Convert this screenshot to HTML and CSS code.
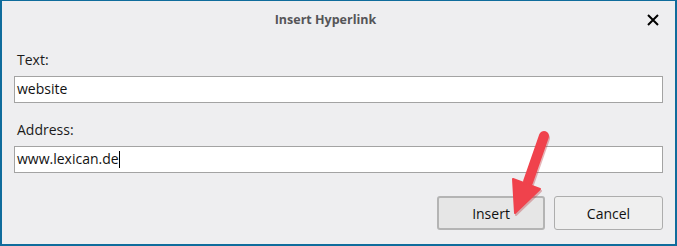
FILE: index.html
```html
<!DOCTYPE html>
<html lang="en">
<head>
    <meta charset="UTF-8">
    <title>Insert Hyperlink</title>
    <link rel="stylesheet" href="styles.css">
</head>
<body>
    <div class="dialog">
        <div class="title-bar">
            <span class="title">Insert Hyperlink</span>
            <span class="close-button">
                <svg width="12" height="12" viewBox="0 0 12 12"><path d="M1 1 L11 11 M11 1 L1 11" stroke="#000" stroke-width="2" fill="none"/></svg>
            </span>
        </div>
        <div class="form">
            <label class="field-label first">Text:</label>
            <div class="text-field">website</div>
            <label class="field-label">Address:</label>
            <div class="text-field">www.lexican.de<span class="caret"></span></div>
            <div class="button-row">
                <button class="dialog-button default">Insert</button>
                <button class="dialog-button">Cancel</button>
            </div>
        </div>
        <!-- callout arrow pointing at the Insert button -->
        <svg class="callout-arrow" width="60" height="100" viewBox="0 0 60 100">
            <g transform="translate(1 2)" fill="#b8323a" stroke="#b8323a" opacity="0.35">
                <path d="M42 14 L26 60" stroke-width="10" stroke-linecap="round"/>
                <path d="M11 57 L38 67 L13 91 Z" stroke-width="2" stroke-linejoin="round"/>
            </g>
            <g fill="#f0424c" stroke="#f0424c">
                <path d="M42 14 L26 60" stroke-width="10" stroke-linecap="round"/>
                <path d="M11 57 L38 67 L13 91 Z" stroke-width="2" stroke-linejoin="round"/>
            </g>
        </svg>
    </div>
</body>
</html>
```

FILE: styles.css
```css
body {
    margin: 0;
    font-family: 'Open Sans', 'Noto Sans', sans-serif;
}
.dialog {
    position: relative;
    box-sizing: border-box;
    width: 677px;
    height: 246px;
    background: #eeeef0;
    border: 2px solid #0f6c9c;
    border-top-width: 1px;
    overflow: hidden;
}
.title-bar {
    height: 36px;
    display: flex;
    align-items: center;
    justify-content: center;
    position: relative;
}
.title {
    font-size: 12.5px;
    font-weight: 700;
    color: #555558;
    margin-left: -26px;
}
.close-button {
    position: absolute;
    right: 16px;
    top: 13px;
    display: flex;
}
.form {
    padding: 0 12px;
    display: flex;
    flex-direction: column;
}
.field-label {
    font-size: 14px;
    color: #1a1a1a;
    padding-left: 3px;
    height: 24px;
    line-height: 24px;
    margin-top: 15px;
    margin-bottom: 4px;
}
.field-label.first {
    margin-top: 11px;
}
.text-field {
    box-sizing: border-box;
    height: 27px;
    background: #ffffff;
    border: 1px solid #a3a3a3;
    font-size: 14px;
    line-height: 24px;
    padding-left: 2px;
    color: #111;
}
.caret {
    display: inline-block;
    width: 1px;
    height: 17px;
    background: #000;
    vertical-align: -4px;
}
.button-row {
    display: flex;
    justify-content: flex-end;
    gap: 9px;
    margin-top: 23px;
}
.dialog-button {
    box-sizing: border-box;
    width: 109px;
    height: 34px;
    font-family: 'Open Sans', 'Noto Sans', sans-serif;
    font-size: 14px;
    color: #111;
    background: #efefef;
    border: 1px solid #adadad;
    border-radius: 3px;
}
.dialog-button.default {
    width: 108px;
    background: #e6e6e6;
    border: 2px solid #b4b4b4;
}
.callout-arrow {
    position: absolute;
    left: 500px;
    top: 121px;
}
```
